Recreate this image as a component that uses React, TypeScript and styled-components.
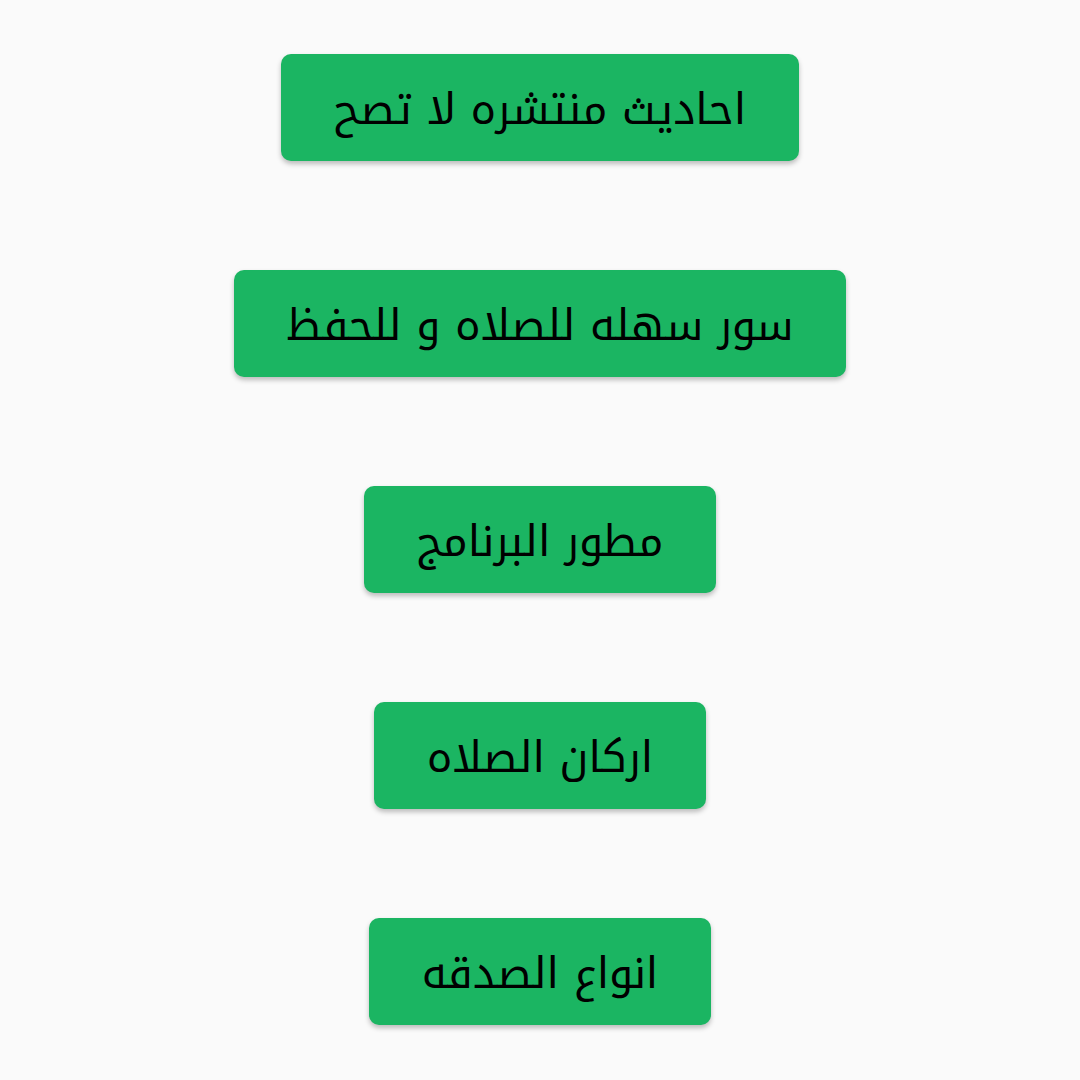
import React from "react";
import styled, { createGlobalStyle } from "styled-components";

const Global = createGlobalStyle`
  html, body { margin: 0; padding: 0; background: #fafafa; }
  body { font-family: "Noto Kufi Arabic", "Noto Sans Arabic", "DejaVu Sans", sans-serif; }
`;

const Page = styled.div`
  width: 1080px;
  height: 1080px;
  background: #fafafa;
  display: flex;
  flex-direction: column;
  align-items: center;
  padding-top: 54px;
  gap: 109px;
  box-sizing: border-box;
`;

const Button = styled.button`
  height: 107px;
  padding: 4px 53px 0;
  border: none;
  border-radius: 10px;
  background: #1bb562;
  color: #000;
  font-family: inherit;
  font-size: 43px;
  direction: rtl;
  box-shadow: 0 3px 5px rgba(0, 0, 0, 0.25);
  display: flex;
  align-items: center;
  justify-content: center;
  cursor: pointer;
`;

const items = [
  "احاديث منتشره لا تصح",
  "سور سهله للصلاه و للحفظ",
  "مطور البرنامج",
  "اركان الصلاه",
  "انواع الصدقه",
];

export default function App() {
  return (
    <>
      <Global />
      <Page>
        {items.map((t) => (
          <Button key={t}>{t}</Button>
        ))}
      </Page>
    </>
  );
}
